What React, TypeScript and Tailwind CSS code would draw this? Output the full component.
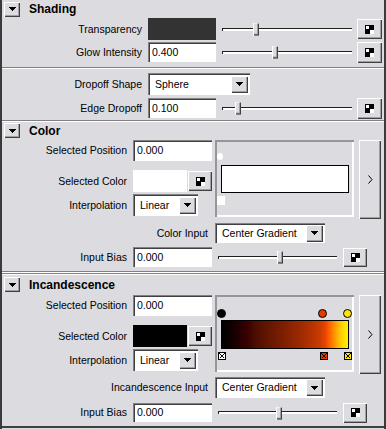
import React from "react";

const raised =
  "bg-[#dcdce0] shadow-[inset_1px_1px_0_#ffffff,inset_-1px_-1px_0_#404040,inset_-2px_-2px_0_#a0a0a4]";
const sunken =
  "shadow-[inset_1px_1px_0_#808080,inset_2px_2px_0_#404040,inset_-1px_-1px_0_#ffffff]";

function Tri() {
  return (
    <svg width="7" height="4" viewBox="0 0 7 4" shapeRendering="crispEdges">
      <path d="M0 0H7L3.5 4Z" fill="#000" />
    </svg>
  );
}

function Checker() {
  return (
    <svg width="9" height="9" viewBox="0 0 9 9" shapeRendering="crispEdges">
      <rect x="0" y="0" width="9" height="9" fill="#000" />
      <rect x="1" y="1" width="3" height="3" fill="#fff" />
      <rect x="5" y="5" width="4" height="4" fill="#fff" />
    </svg>
  );
}

function MapBtn({ className }: { className: string }) {
  return (
    <div className={`${raised} flex items-center justify-center ${className}`}>
      <Checker />
    </div>
  );
}

function Field({ value, className }: { value: string; className: string }) {
  return (
    <div className={`bg-white ${sunken} flex items-center pl-[4px] ${className}`}>
      {value}
    </div>
  );
}

function Slider({ pos, className }: { pos: number; className: string }) {
  return (
    <div className={`relative flex items-center ${className}`}>
      <div className="w-full h-[3px] border-t border-l border-[#202020] bg-white" />
      <div
        className={`absolute top-1/2 -translate-y-1/2 w-[6px] h-[13px] ${raised}`}
        style={{ left: pos }}
      />
    </div>
  );
}

function Select({ value, className }: { value: string; className: string }) {
  return (
    <div
      className={`bg-white ${sunken} flex items-center justify-between pl-[7px] pr-[2px] ${className}`}
    >
      <span>{value}</span>
      <div className={`${raised} w-[17px] h-[17px] flex items-center justify-center`}>
        <Tri />
      </div>
    </div>
  );
}

function Header({ title, className }: { title: string; className: string }) {
  return (
    <div className={`flex items-center ${className}`}>
      <div
        className={`${raised} w-[16px] h-[15px] ml-[2px] flex items-center justify-center`}
      >
        <Tri />
      </div>
      <span className="ml-[9px] font-bold text-[12px]">{title}</span>
    </div>
  );
}

function Label({ text, className }: { text: string; className: string }) {
  return <div className={`text-right pr-[6px] shrink-0 ${className}`}>{text}</div>;
}

function ArrowBtn() {
  return (
    <div className={`${raised} w-[22px] h-[79px] ml-[5px] flex items-center justify-center`}>
      <svg width="5" height="9" viewBox="0 0 5 9">
        <path d="M0.5 0.5L4 4.5L0.5 8.5" stroke="#000" fill="none" strokeWidth="1" />
      </svg>
    </div>
  );
}

function Circle({ x, color }: { x: number; color: string }) {
  return (
    <div
      className="absolute top-[14px] w-[9px] h-[9px] rounded-full border border-black"
      style={{ left: x, background: color }}
    />
  );
}

function Square({ x, color }: { x: number; color: string }) {
  return (
    <svg
      className="absolute top-[57px]"
      style={{ left: x }}
      width="8"
      height="8"
      viewBox="0 0 8 8"
      shapeRendering="crispEdges"
    >
      <rect x="0.5" y="0.5" width="7" height="7" fill={color} stroke="#000" />
      <path d="M1.5 1.5L6.5 6.5M6.5 1.5L1.5 6.5" stroke="#000" />
    </svg>
  );
}

function GradientBlock({
  swatch,
  children,
}: {
  swatch: string;
  children: React.ReactNode;
}) {
  return (
    <div className="flex mt-[1px] h-[79px]">
      <div className="flex flex-col w-[210px]">
        <div className="flex items-center h-[21px]">
          <Label text="Selected Position" className="w-[131px]" />
          <Field value="0.000" className="w-[79px] h-[21px]" />
        </div>
        <div className="flex items-center h-[22px] mt-[9px]">
          <Label text="Selected Color" className="w-[131px]" />
          <div className={`w-[54px] h-[22px] ${swatch}`} />
          <MapBtn className="w-[24px] h-[20px] ml-[1px]" />
        </div>
        <div className="flex items-center h-[22px] mt-[2px]">
          <Label text="Interpolation" className="w-[131px]" />
          <Select value="Linear" className="w-[65px] h-[22px]" />
        </div>
      </div>
      <div className="relative w-[139px] h-[77px] ml-[3px] overflow-hidden shadow-[inset_2px_2px_0_#96969a,inset_-2px_-2px_0_#ffffff]">
        {children}
      </div>
      <ArrowBtn />
    </div>
  );
}

export default function App() {
  return (
    <div className="w-[386px] h-[429px] bg-[#dcdce0] border-l-2 border-r-2 border-[#3a3a3a] overflow-hidden font-['Liberation_Sans',Arial,sans-serif] text-[10.5px] text-black leading-none flex flex-col">
      <Header title="Shading" className="h-[18px]" />

      <div className="flex items-center h-[22px]">
        <Label text="Transparency" className="w-[146px]" />
        <div className="w-[68px] h-[22px] bg-[#333333]" />
        <Slider pos={31} className="w-[130px] h-[22px] ml-[6px]" />
        <MapBtn className="w-[25px] h-[20px] ml-[5px]" />
      </div>
      <div className="flex items-center h-[20px] mt-[2px]">
        <Label text="Glow Intensity" className="w-[146px]" />
        <Field value="0.400" className="w-[68px] h-[20px]" />
        <Slider pos={50} className="w-[130px] h-[20px] ml-[6px]" />
        <MapBtn className="w-[25px] h-[21px] ml-[5px]" />
      </div>

      <div className="mt-[5px] h-[2px] border-t border-b border-t-[#808084] border-b-white" />

      <div className="flex items-center h-[22px] mt-[4px]">
        <Label text="Dropoff Shape" className="w-[146px]" />
        <Select value="Sphere" className="w-[102px] h-[22px]" />
      </div>
      <div className="flex items-center h-[20px] mt-[3px]">
        <Label text="Edge Dropoff" className="w-[146px]" />
        <Field value="0.100" className="w-[68px] h-[20px]" />
        <Slider pos={13} className="w-[130px] h-[20px] ml-[6px]" />
        <MapBtn className="w-[25px] h-[21px] ml-[5px]" />
      </div>

      <div className="mt-[2px] h-[2px] border-t border-b border-t-[#808084] border-b-white" />

      <Header title="Color" className="h-[17px]" />
      <GradientBlock swatch="bg-white">
        <div className="absolute left-[2px] top-[13px] w-[6px] h-[7px] rounded-full bg-white" />
        <div className="ml-[6px] mt-[25px] w-[128px] h-[28px] bg-white border border-black" />
        <div className="absolute left-[2px] top-[56px] w-[8px] h-[9px] bg-white" />
      </GradientBlock>
      <div className="flex items-center h-[20px] mt-[4px]">
        <Label text="Color Input" className="w-[213px] pr-[7px]" />
        <Select value="Center Gradient" className="w-[110px] h-[20px]" />
      </div>
      <div className="flex items-center h-[20px] mt-[4px]">
        <Label text="Input Bias" className="w-[131px]" />
        <Field value="0.000" className="w-[79px] h-[20px]" />
        <Slider pos={59} className="w-[119px] h-[20px] ml-[6px]" />
        <MapBtn className="w-[24px] h-[19px] ml-[6px]" />
      </div>

      <div className="mt-[4px] h-[4px] border-t border-b border-t-[#808084] border-b-white bg-[#808084] shadow-[inset_0_1px_0_#ffffff]" />

      <Header title="Incandescence" className="h-[19px]" />
      <GradientBlock swatch="bg-black">
        <Circle x={2} color="#000000" />
        <Circle x={103} color="#e03c00" />
        <Circle x={128} color="#ffe600" />
        <div className="ml-[6px] mt-[25px] w-[128px] h-[29px] border border-black bg-[linear-gradient(to_right,#000000_0%,#0c0000_6%,#260000_14%,#380000_20%,#4a0e00_26%,#621600_36%,#802000_50%,#9c2a00_62%,#b83400_72%,#cc3c00_78%,#e84400_82%,#ff6000_85%,#ff9000_89%,#ffc000_93%,#ffe000_97%,#fff000_100%)]" />
        <Square x={3} color="#ffffff" />
        <Square x={105} color="#e03c00" />
        <Square x={129} color="#ffe600" />
      </GradientBlock>
      <div className="flex items-center h-[21px] mt-[3px]">
        <Label text="Incandescence Input" className="w-[213px] pr-[7px]" />
        <Select value="Center Gradient" className="w-[110px] h-[21px]" />
      </div>
      <div className="flex items-center h-[19px] mt-[5px]">
        <Label text="Input Bias" className="w-[131px]" />
        <Field value="0.000" className="w-[79px] h-[19px]" />
        <Slider pos={58} className="w-[119px] h-[19px] ml-[6px]" />
        <MapBtn className="w-[24px] h-[20px] ml-[6px]" />
      </div>

      <div className="mt-[4px] h-[2px] border-t border-b border-t-[#404040] border-b-[#404040]" />
    </div>
  );
}
